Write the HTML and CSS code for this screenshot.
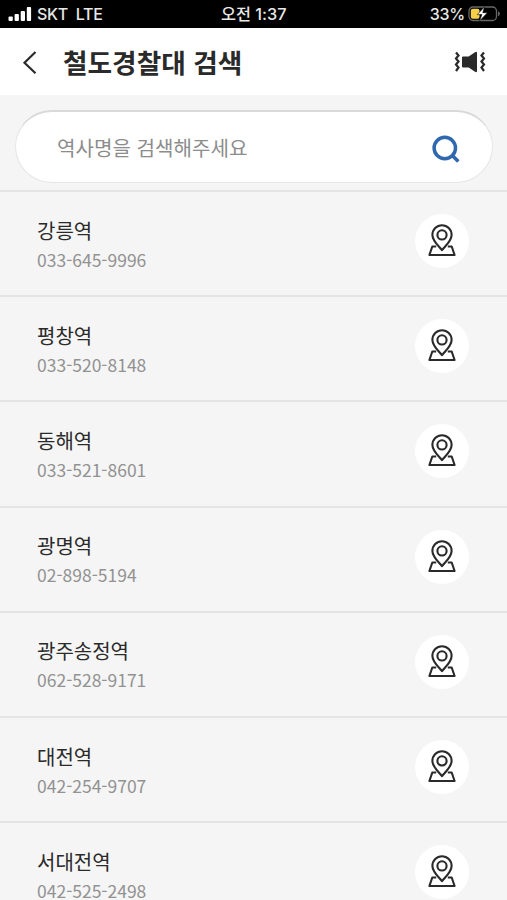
FILE: index.html
```
<!DOCTYPE html>
<html lang="ko">
<head>
  <meta charset="UTF-8">
  <meta name="viewport" content="width=device-width, initial-scale=1.0">
  <title>철도경찰대 검색</title>
  <link rel="stylesheet" href="styles.css">
</head>
<body>
  <svg class="symbols" width="0" height="0">
    <symbol id="pin" viewBox="0 0 28 34">
      <path d="M8.200 22.500H4.300L1.400 31h25.200l-2.900-8.500h-3.900"/>
      <path d="M14 26.200C11.500 22.800 4.400 17 4.400 10.900a9.600 9.600 0 0 1 19.200 0C23.600 17 16.500 22.800 14 26.200z"/>
      <circle cx="14" cy="10.900" r="4.600"/>
    </symbol>
  </svg>
  <div class="status">
    <svg class="signal" width="24" height="16" viewBox="0 0 24 16">
      <rect x="0.500" y="10.500" width="4.300" height="4.500" rx="1"/>
      <rect x="6.600" y="8" width="4.300" height="7" rx="1"/>
      <rect x="12.700" y="5" width="4.300" height="10" rx="1"/>
      <rect x="18.800" y="1" width="4.300" height="14" rx="1"/>
    </svg>
    <span class="carrier">SKT&nbsp; LTE</span>
    <span class="time">오전 1:37</span>
    <span class="percent">33%</span>
    <svg class="battery" width="33" height="16" viewBox="0 0 33 16">
      <rect x="1" y="1" width="27.500" height="13.500" rx="4" fill="none" stroke="#68686a" stroke-width="1.300"/>
      <path d="M30 5.300c2.400.8 2.400 4.200 0 5z" fill="#68686a"/>
      <rect x="2.800" y="2.800" width="8.700" height="10" rx="2" fill="#f5cf4a"/>
      <path d="M16.500.8 9.300 8.600h4.600L11.500 15l8-8.300h-4.700z" fill="#fff" stroke="#000" stroke-width=".6"/>
    </svg>
  </div>
  <header class="header">
    <svg class="back" width="16" height="24" viewBox="0 0 16 24">
      <path d="M13.500 2 2.500 12.800l11 10.400"/>
    </svg>
    <h1>철도경찰대 검색</h1>
    <svg class="siren" width="32" height="22" viewBox="0 0 32 22">
      <path class="speaker" d="M8 6.500q0-1 1-1h5.700L21 1.200q2-1.200 2 .8v18q0 2-2 .8l-6.300-4.300H9q-1 0-1-1z"/>
      <path d="M2 1.500l2.500 3-2.500 3 2.500 3-2.500 3 2.500 3-2.500 3.500"/>
      <path d="M30 1.500l-2.500 3 2.500 3-2.500 3 2.500 3-2.500 3 2.500 3.500"/>
    </svg>
  </header>
  <main>
    <div class="search">
      <div class="search-box">
        <span>역사명을 검색해주세요</span>
        <svg width="28" height="28" viewBox="0 0 28 28">
          <circle cx="12.800" cy="13" r="10.700"/>
          <path d="M20.300 20.500l6 6"/>
        </svg>
      </div>
    </div>
    <ul class="stations">
      <li>
        <div><h2>강릉역</h2><p>033-645-9996</p></div>
        <span class="map"><svg><use href="#pin"/></svg></span>
      </li>
      <li>
        <div><h2>평창역</h2><p>033-520-8148</p></div>
        <span class="map"><svg><use href="#pin"/></svg></span>
      </li>
      <li>
        <div><h2>동해역</h2><p>033-521-8601</p></div>
        <span class="map"><svg><use href="#pin"/></svg></span>
      </li>
      <li>
        <div><h2>광명역</h2><p>02-898-5194</p></div>
        <span class="map"><svg><use href="#pin"/></svg></span>
      </li>
      <li>
        <div><h2>광주송정역</h2><p>062-528-9171</p></div>
        <span class="map"><svg><use href="#pin"/></svg></span>
      </li>
      <li>
        <div><h2>대전역</h2><p>042-254-9707</p></div>
        <span class="map"><svg><use href="#pin"/></svg></span>
      </li>
      <li>
        <div><h2>서대전역</h2><p>042-525-2498</p></div>
        <span class="map"><svg><use href="#pin"/></svg></span>
      </li>
    </ul>
  </main>
</body>
</html>
```
FILE: styles.css
```
:root {
  --text: #2a2a2a;
  --muted: #929292;
  --page: #f5f5f5;
  --line: #e4e4e4;
  --blue: #2f68ae;
}
* {
  margin: 0;
  padding: 0;
  box-sizing: border-box;
}
body {
  height: 900px;
  overflow: hidden;
  background: var(--page);
  color: var(--text);
  font-family: "Noto Sans CJK KR", "Noto Sans", sans-serif;
}
.symbols {
  display: block;
  height: 0;
}

/* status bar */
.status {
  display: flex;
  align-items: center;
  height: 28px;
  padding: 0 6px 0 8px;
  background: #000;
  color: #e8e8e8;
  font: 500 16.3px/28px Inter, "Noto Sans CJK KR", sans-serif;
}
.signal {
  fill: #fff;
}
.carrier {
  width: 189px;
  padding-left: 5px;
  font-size: 16px;
  letter-spacing: -0.3px;
}
.time {
  flex: 1;
}
.percent {
  margin-right: 3px;
  font-size: 16px;
  letter-spacing: -0.2px;
}

/* title bar */
.header {
  display: flex;
  align-items: center;
  height: 67px;
  padding: 0 21px 0 22px;
  background: #fff;
}
.header h1 {
  flex: 1;
  padding-left: 25px;
  font-size: 26.7px;
  font-weight: 700;
  line-height: 67px;
}
.back,
.siren {
  fill: none;
  stroke: var(--text);
  stroke-width: 2.2;
}
.siren .speaker {
  fill: var(--text);
  stroke: none;
}

/* search */
.search {
  height: 95px;
  padding: 15px 14px 0 15px;
}
.search-box {
  display: flex;
  align-items: center;
  justify-content: space-between;
  height: 73px;
  padding: 0 32px 0 41px;
  border: 1px solid #e6e6e6;
  border-top: 2px solid #d9d9d9;
  border-radius: 37px;
  background: #fff;
  color: #8c8c8c;
  font-size: 20.1px;
}
.search-box span {
  padding-top: 1px;
}
.search-box svg {
  margin-top: 3px;
  fill: none;
  stroke: var(--blue);
  stroke-width: 3.5;
}

/* station list */
.stations {
  list-style: none;
}
.stations li {
  display: flex;
  align-items: center;
  justify-content: space-between;
  height: 105.2px;
  padding: 0 38px 5px 37px;
  border-top: 2px solid var(--line);
}
.stations li > div {
  padding-top: 7px;
}
.stations h2 {
  font-size: 20px;
  font-weight: 400;
  line-height: 30px;
}
.stations p {
  color: var(--muted);
  font-size: 17.5px;
  line-height: 28px;
}
.map {
  display: grid;
  place-items: center;
  width: 54px;
  height: 54px;
  border-radius: 50%;
  background: #fff;
}
.map svg {
  width: 28px;
  height: 34px;
  fill: none;
  stroke: var(--text);
  stroke-width: 2.1;
  stroke-linejoin: round;
}
```
